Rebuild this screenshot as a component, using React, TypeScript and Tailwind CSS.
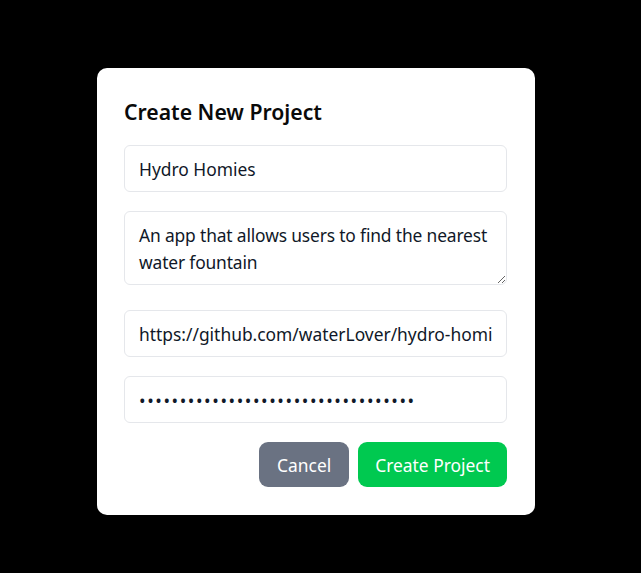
import { useState } from 'react';

export default function App() {
  const [name, setName] = useState('Hydro Homies');
  const [description, setDescription] = useState(
    'An app that allows users to find the nearest water fountain'
  );
  const [repo, setRepo] = useState('https://github.com/waterLover/hydro-homies');
  const [token, setToken] = useState('ghp_abcdefghijklmnopqrstuvwxyz1234');

  const inputClass =
    'block w-full rounded-[6px] border border-[#e5e7eb] bg-white px-[14px] pt-[10px] pb-[8px] text-[17.4px] leading-[27px] text-[#101828] outline-none';

  return (
    <div
      className="min-h-[573px] w-full bg-black pt-[68px] pl-[97px]"
      style={{ fontFamily: '"Noto Sans", "Open Sans", sans-serif' }}
    >
      <div className="w-[438px] rounded-[10px] bg-white pt-[28px] pr-[28px] pb-[28px] pl-[27px]">
        <h2 className="mb-[17px] text-[21.2px] leading-[32px] font-semibold text-[#0a0a0a]">
          Create New Project
        </h2>

        <input
          className={`${inputClass} mb-[19px]`}
          value={name}
          onChange={(e) => setName(e.target.value)}
          placeholder="Project name"
        />

        <textarea
          className={`${inputClass} mb-[25px] h-[74px] pr-[6px] tracking-[-0.15px]`}
          value={description}
          onChange={(e) => setDescription(e.target.value)}
          placeholder="Description"
        />

        <input
          className={`${inputClass} mb-[19px]`}
          value={repo}
          onChange={(e) => setRepo(e.target.value)}
          placeholder="Repository URL"
        />

        <input
          type="password"
          className={`${inputClass} mb-[19px] tracking-[1.6px]`}
          value={token}
          onChange={(e) => setToken(e.target.value)}
          placeholder="Access token"
        />

        <div className="flex justify-end gap-[9px]">
          <button className="h-[45px] rounded-[9px] bg-[#6a7282] px-[18px] pt-[2px] text-[17.4px] text-white">
            Cancel
          </button>
          <button className="h-[45px] rounded-[9px] bg-[#00c950] px-[17px] pt-[2px] text-[17.4px] text-white">
            Create Project
          </button>
        </div>
      </div>
    </div>
  );
}
